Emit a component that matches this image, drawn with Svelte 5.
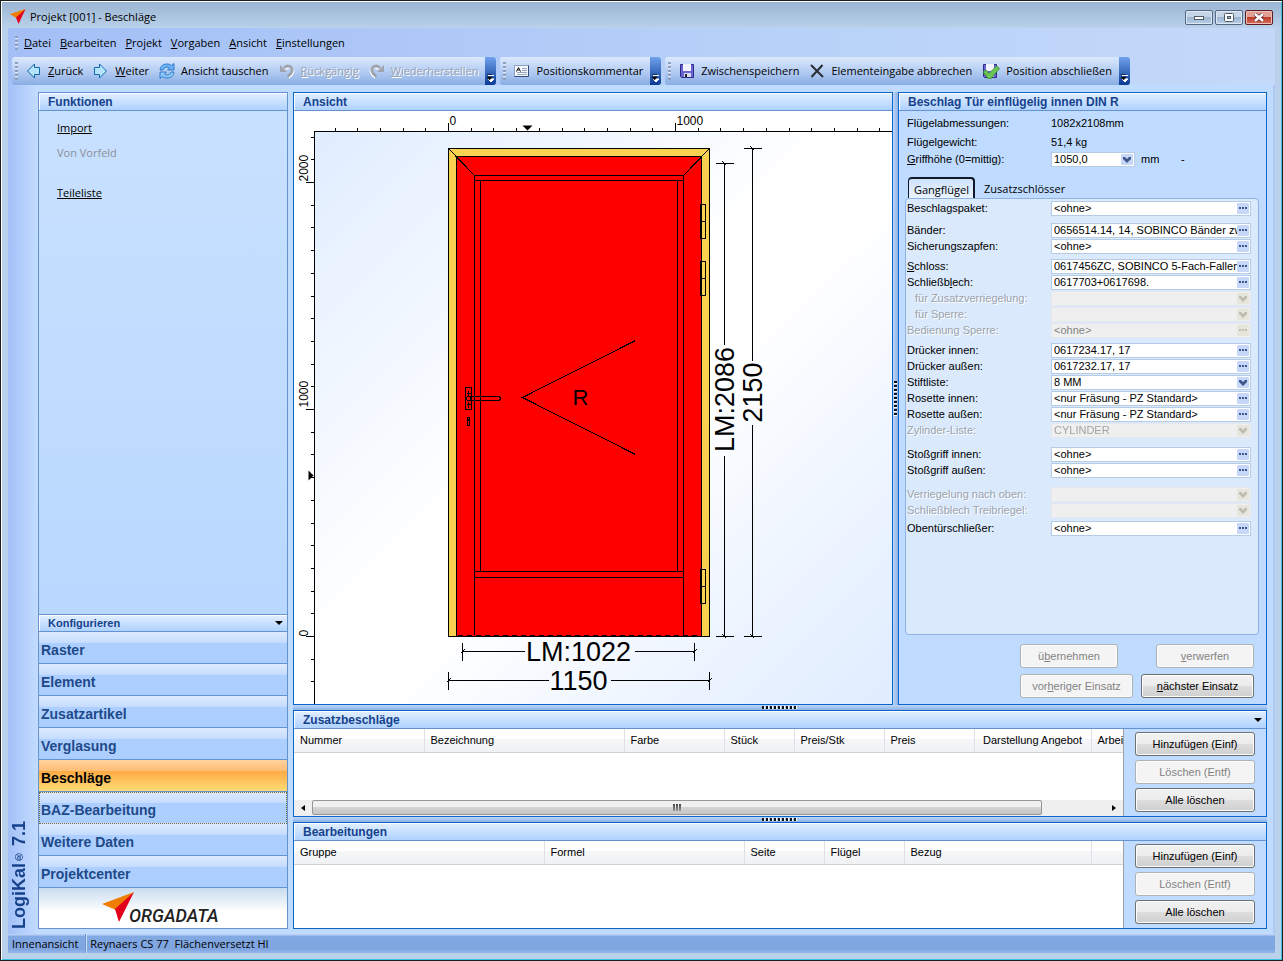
<script lang="ts">
	type Field = {
		label: string;
		value?: string;
		kind?: 'pick' | 'list';
		disabled?: boolean;
		indent?: boolean;
	};

	type Column = { title: string; width: number; center?: boolean };

	const menus = ['&Datei', '&Bearbeiten', '&Projekt', '&Vorgaben', '&Ansicht', '&Einstellungen'];

	const toolGroups = [
		[
			{ icon: 'back', label: '&Zurück' },
			{ icon: 'next', label: '&Weiter' },
			{ icon: 'swap', label: 'Ansicht tauschen' },
			{ icon: 'undo', label: '&Rückgängig', disabled: true },
			{ icon: 'redo', label: '&Wiederherstellen', disabled: true }
		],
		[{ icon: 'note', label: 'Positionskommentar' }],
		[
			{ icon: 'save', label: 'Zwischenspeichern' },
			{ icon: 'cancel', label: 'Elementeingabe abbrechen' },
			{ icon: 'done', label: 'Position abschließen' }
		]
	];

	const navItems = [
		'Raster',
		'Element',
		'Zusatzartikel',
		'Verglasung',
		'Beschläge',
		'BAZ-Bearbeitung',
		'Weitere Daten',
		'Projektcenter'
	];
	let activeNav = $state('Beschläge');

	const fieldGroups: { space: number; fields: Field[] }[] = [
		{ space: 0, fields: [{ label: 'Beschlagspaket:', value: '<ohne>' }] },
		{
			space: 6,
			fields: [
				{ label: 'Bänder:', value: '0656514.14, 14, SOBINCO Bänder zweiteilig' },
				{ label: 'Sicherungszapfen:', value: '<ohne>' }
			]
		},
		{
			space: 4,
			fields: [
				{ label: '&Schloss:', value: '0617456ZC, SOBINCO 5-Fach-Fallenschloss' },
				{ label: 'Schließb&lech:', value: '0617703+0617698.' },
				{ label: 'für Zusatzverriegelung:', kind: 'list', disabled: true, indent: true },
				{ label: 'für Sperre:', kind: 'list', disabled: true, indent: true },
				{ label: 'Bedienung Sperre:', value: '<ohne>', disabled: true }
			]
		},
		{
			space: 4,
			fields: [
				{ label: 'Drücker innen:', value: '0617234.17, 17' },
				{ label: 'Drücker außen:', value: '0617232.17, 17' },
				{ label: 'Stiftliste:', value: '8 MM', kind: 'list' },
				{ label: 'Rosette innen:', value: '<nur Fräsung - PZ Standard>' },
				{ label: 'Rosette außen:', value: '<nur Fräsung - PZ Standard>' },
				{ label: 'Zylinder-Liste:', value: 'CYLINDER', kind: 'list', disabled: true }
			]
		},
		{
			space: 8,
			fields: [
				{ label: 'Stoßgriff innen:', value: '<ohne>' },
				{ label: 'Stoßgriff außen:', value: '<ohne>' }
			]
		},
		{
			space: 8,
			fields: [
				{ label: 'Verriegelung nach oben:', kind: 'list', disabled: true },
				{ label: 'Schließblech Treibriegel:', kind: 'list', disabled: true }
			]
		},
		{ space: 2, fields: [{ label: 'Obentürschließer:', value: '<ohne>' }] }
	];

	const fittingColumns: Column[] = [
		{ title: 'Nummer', width: 130 },
		{ title: 'Bezeichnung', width: 200 },
		{ title: 'Farbe', width: 100 },
		{ title: 'Stück', width: 70 },
		{ title: 'Preis/Stk', width: 90 },
		{ title: 'Preis', width: 90 },
		{ title: 'Darstellung Angebot', width: 117, center: true },
		{ title: 'Arbeit', width: 80 }
	];

	const machiningColumns: Column[] = [
		{ title: 'Gruppe', width: 250 },
		{ title: 'Formel', width: 200 },
		{ title: 'Seite', width: 80 },
		{ title: 'Flügel', width: 80 },
		{ title: 'Bezug', width: 187 },
		{ title: '', width: 80 }
	];

	// one ruler tick every 100 mm
	const scale = 22.7;
	const xTicks = Array.from({ length: 25 }, (_, i) => i - 5);
	const yTicks = Array.from({ length: 25 }, (_, i) => i - 2);
	const hinges = [204, 261, 569];

	// "&" marks the mnemonic letter
	function split(label: string) {
		const at = label.indexOf('&');
		if (at < 0) return [label, '', ''];
		return [label.slice(0, at), label[at + 1], label.slice(at + 2)];
	}
</script>

{#snippet caption(label: string)}
	{@const [before, key, after] = split(label)}<span>{before}{#if key}<u>{key}</u>{/if}{after}</span>
{/snippet}

{#snippet chevron()}
	<svg class="chevron" width="12" height="11" viewBox="0 0 12 11" aria-hidden="true">
		<rect class="tile" width="12" height="11" rx="1" />
		<path d="M2 3h2l2 2 2-2h2v2L6 9 2 5z" />
	</svg>
{/snippet}

{#snippet icon(name: string)}
	{#if name === 'back' || name === 'next'}
		<svg width="16" height="16" viewBox="0 0 16 16" aria-hidden="true">
			<path
				d="M1.500 8L8.500 1v3.500h5v7h-5V15z"
				transform={name === 'next' ? 'matrix(-1 0 0 1 15 0)' : undefined}
				fill="#b4e4fa"
				stroke="#1467a8"
			/>
		</svg>
	{:else if name === 'swap'}
		<svg width="16" height="16" viewBox="0 0 16 16" aria-hidden="true">
			<path d="M1 7c.5-4 3-6 7-6 2 0 3.500.600 4.500 1.500L15 .5V7H8.500l2-2.200C8 3.500 5.500 4 4 7z" fill="#6db4f2" stroke="#1c68c4" stroke-width=".8" />
			<path d="M15 9c-.5 4-3 6-7 6-2 0-3.500-.6-4.500-1.500L1 15.500V9h6.500l-2 2.200C8 12.500 10.500 12 12 9z" fill="#8cc8f8" stroke="#1c68c4" stroke-width=".8" />
		</svg>
	{:else if name === 'undo' || name === 'redo'}
		<svg width="16" height="16" viewBox="0 0 16 16" aria-hidden="true">
			<g transform={name === 'redo' ? 'matrix(-1 0 0 1 16 0)' : undefined} fill="none">
				<path d="M5 5c4-4 9-1 8 3-.5 2-2 4-4.500 5.500" stroke="#fff" stroke-width="2.500" transform="translate(1 1)" />
				<path d="M5 5c4-4 9-1 8 3-.5 2-2 4-4.500 5.500" stroke="#a0a4ac" stroke-width="3" />
				<path d="M1 2v7h7z" fill="#a0a4ac" />
			</g>
		</svg>
	{:else if name === 'note'}
		<svg width="16" height="16" viewBox="0 0 16 16" aria-hidden="true">
			<rect x=".5" y="2.500" width="14" height="11" fill="#f4f8ff" stroke="#8fa3c4" />
			<path d="M.5 13.500h14v-11" fill="none" stroke="#344d7c" />
			<path d="M2.500 8.500l2-4 2 4M3.500 7h2" fill="none" stroke="#111" />
			<path d="M8 5.500h5M8 7.500h5M3 9.500h10M3 11.500h10" stroke="#9aa6bd" />
		</svg>
	{:else if name === 'cancel'}
		<svg width="16" height="16" viewBox="0 0 16 16" aria-hidden="true">
			<path d="M2 2l12 12M13.500 2L2.500 14" stroke="#2b2f38" stroke-width="2" fill="none" />
		</svg>
	{:else}
		<svg width={name === 'done' ? 18 : 16} height="16" viewBox="0 0 {name === 'done' ? 18 : 16} 16" aria-hidden="true">
			<path d="M1.500 1.500h13v13h-12l-1-1z" fill="#6a64d2" stroke="#2e2a86" />
			<rect x="4" y="1" width="8" height="7" fill="#f1f4ff" />
			<rect x="5" y="10" width="7" height="4" fill="#d8dcf0" />
			<rect x="6" y="11" width="2" height="3" fill="#222" />
			{#if name === 'done'}
				<path d="M1 9l3-2 3 3.500L14.500 3l3 2.500L8.500 16H6.500z" fill="#6cc655" stroke="#2f8a2a" stroke-width=".8" />
			{/if}
		</svg>
	{/if}
{/snippet}

{#snippet listView(name: string, columns: Column[])}
	<div class="table-clip">
		<table aria-label={name}>
			<colgroup>
				{#each columns as column}
					<col style="width: {column.width}px" />
				{/each}
			</colgroup>
			<thead>
				<tr>
					{#each columns as column}
						<th class:center={column.center}>{column.title}</th>
					{/each}
				</tr>
			</thead>
		</table>
	</div>
{/snippet}

{#snippet listActions()}
	<div class="list-actions">
		<button class="push">Hinzufügen (Einf)</button>
		<button class="push" disabled>Löschen (Entf)</button>
		<button class="push">Alle löschen</button>
	</div>
{/snippet}

<div class="window">
	<header class="titlebar">
		<svg width="16" height="16" viewBox="0 0 16 16" aria-hidden="true">
			<path d="M0 5L15.500 0 7 9.500z" fill="#ef7d00" />
			<path d="M15.500 0L8.500 15 6 8.500z" fill="#e2001a" />
		</svg>
		<h1>Projekt [001] - Beschläge</h1>
		<div class="window-buttons">
			<button aria-label="Minimieren">
				<svg width="12" height="8" viewBox="0 0 12 8"><rect x="1.500" y="3.500" width="9" height="3" fill="#fff" stroke="#505a66" /></svg>
			</button>
			<button aria-label="Maximieren">
				<svg width="12" height="9" viewBox="0 0 12 9"><rect x="1.500" y=".5" width="9" height="8" rx="1" fill="#fff" stroke="#505a66" /><rect x="4.500" y="3.500" width="3" height="2" fill="#9fb6d0" stroke="#505a66" /></svg>
			</button>
			<button class="close" aria-label="Schließen">
				<svg width="12" height="9" viewBox="0 0 12 9"><path d="M2 1l8 7M10 1L2 8" stroke="#5a2630" stroke-width="4" /><path d="M2 1l8 7M10 1L2 8" stroke="#fff" stroke-width="2.500" /></svg>
			</button>
		</div>
	</header>

	<div class="client">
		<nav class="menubar" aria-label="Menü">
			<i class="grip"></i>
			{#each menus as menu}
				<button>{@render caption(menu)}</button>
			{/each}
		</nav>

		<div class="toolbars">
			{#each toolGroups as group}
				<div class="toolbar" role="toolbar">
					<i class="grip"></i>
					{#each group as tool}
						<button class="tool" disabled={tool.disabled}>
							{@render icon(tool.icon)}
							{@render caption(tool.label)}
						</button>
					{/each}
					<button class="more" aria-label="Weitere Schaltflächen">
						<svg width="7" height="8" viewBox="0 0 7 8"><path d="M1 1.500h6M1 5h6l-3 3z" fill="#fff" stroke="#fff" /><path d="M0 .5h5M0 3h5L2.500 6z" fill="#000" stroke="#000" stroke-width=".5" /></svg>
					</button>
				</div>
			{/each}
		</div>

		<div class="workspace">
			<div class="brand"><span>LogiKal<small>®</small> 7.1</span></div>

			<aside class="sidebar">
				<h2 class="bar">Funktionen</h2>
				<div class="functions">
					<a href="#import">Import</a>
					<span class="off">Von Vorfeld</span>
					<a class="parts" href="#teileliste">Teileliste</a>
				</div>
				<button class="bar configure">
					Konfigurieren
					<svg width="8" height="4" viewBox="0 0 8 4" aria-hidden="true"><path d="M0 0h8L4 4z" /></svg>
				</button>
				<nav>
					{#each navItems as item}
						<button
							class="nav-item"
							class:active={item === activeNav}
							class:focus={item === 'BAZ-Bearbeitung'}
							onclick={() => (activeNav = item)}
						>
							{item}
						</button>
					{/each}
				</nav>
				<div class="logo">
					<svg width="124" height="36" viewBox="0 0 124 36" role="img" aria-label="Orgadata">
						<path d="M1 14L33 2 15 20z" fill="#ef7d00" />
						<path d="M33 2L18 32 14 19z" fill="#e2001a" />
						<text x="28" y="32">ORGADATA</text>
					</svg>
				</div>
			</aside>

			<main>
				<div class="upper">
					<section class="panel view">
						<h2 class="bar">Ansicht</h2>
						<!-- integer coordinates are pixel centres -->
						<svg
							class="drawing"
							viewBox="293.500 110.500 598 592"
							preserveAspectRatio="xMidYMin meet"
							role="img"
							aria-label="Türansicht"
						>
							<defs>
								<linearGradient id="sky" x1="0" y1="0" x2="1" y2="1">
									<stop offset="0" stop-color="#dfedff" />
									<stop offset=".12" stop-color="#e9f2ff" />
									<stop offset=".45" stop-color="#fff" />
									<stop offset=".55" stop-color="#fff" />
									<stop offset=".85" stop-color="#e9f2ff" />
									<stop offset="1" stop-color="#dfedff" />
								</linearGradient>
							</defs>
							<rect x="293" y="110" width="600" height="595" fill="#fff" />
							<rect x="314" y="131" width="580" height="574" fill="url(#sky)" />

							<g class="line">
								<path d="M314 706V131H893" />
								{#each xTicks as n}
									<path d="M{Math.round(448 + n * scale)} 131v{n % 10 === 0 ? -9 : -4}" />
								{/each}
								{#each yTicks as n}
									<path d="M314 {Math.round(636 - n * scale)}h{n % 10 === 0 ? -9 : -4}" />
								{/each}
							</g>
							<path d="M522 125h10l-5 5z" />
							<path d="M308 470v10l5-5z" />
							<g class="ruler-text">
								<text x="449" y="124">0</text>
								<text x="676" y="124">1000</text>
								<text transform="translate(307 181) rotate(-90)">2000</text>
								<text transform="translate(307 407) rotate(-90)">1000</text>
								<text transform="translate(307 636) rotate(-90)">0</text>
							</g>

							<g class="line">
								<rect x="448" y="148" width="261" height="488" fill="#fad050" />
								<rect x="456" y="156" width="245" height="480" fill="#f00" />
								<path d="M474 636V175H683V636M474 180H683M480 180V571M677 180V571M474 571H683M474 577H683" />
								<path d="M448 148l26 27M709 148l-26 27M635 340L522 397 635 454" />
								<path d="M457 635H701" stroke="#f00" />
								<path d="M457 635H701" stroke-dasharray="5 4" />
								{#each hinges as y}
									<rect x="700" {y} width="5" height="34" />
									<path d="M701 {y}v34M700 {y + 17}h5" />
								{/each}
								<rect x="465" y="387" width="6" height="22" />
								<path d="M468 390v6M466 393h5M468 401v6M466 404h5" />
								<path d="M470 396h29l1 2-1 2h-29z" />
								<circle cx="468" cy="398" r="2" />
								<circle cx="468" cy="418" r="1" />
								<path d="M467 420h2v5h-2z" />
								<path d="M724 163V344M724 455V636M715 163h18M715 636h18M722 161l4 4M722 634l4 4" />
								<path d="M752 148V360M752 424V636M743 148h18M743 636h18M750 146l4 4M750 634l4 4" />
								<path d="M462 651H524M634 651H694M462 642v18M694 642v18M460 653l4-4M692 653l4-4" />
								<path d="M448 680H548M610 680H709M448 671v18M709 671v18M446 682l4-4M707 682l4-4" />
							</g>
							<text class="mark" x="572" y="404">R</text>
							<g class="dimension">
								<text transform="translate(733 399) rotate(-90)">LM:2086</text>
								<text transform="translate(761 392) rotate(-90)">2150</text>
								<text x="578" y="660">LM:1022</text>
								<text x="578" y="689">1150</text>
							</g>
						</svg>
					</section>

					<div class="splitter upright"><i></i></div>

					<section class="panel fittings">
						<h2 class="bar">Beschlag Tür einflügelig innen DIN R</h2>
						<dl>
							<dt>Flügelabmessungen:</dt>
							<dd>1082x2108mm</dd>
							<dt>Flügelgewicht:</dt>
							<dd>51,4 kg</dd>
						</dl>
						<div class="field handle">
							<label for="handle-height">{@render caption('&Griffhöhe (0=mittig):')}</label>
							<div class="control">
								<select id="handle-height"><option>1050,0</option></select>
								{@render chevron()}
							</div>
							<span class="unit">mm</span>
							<span>-</span>
						</div>
						<div class="tabs" role="tablist">
							<button role="tab" aria-selected="true">Gangflügel</button>
							<button role="tab" aria-selected="false">Zusatzschlösser</button>
						</div>
						<div class="tab-page">
							{#each fieldGroups as group, g}
								<div class="group" style="margin-top: {group.space}px">
									{#each group.fields as field, f}
										<div class="field" class:indent={field.indent} class:off={field.disabled}>
											<label for="field-{g}-{f}">{@render caption(field.label)}</label>
											<div class="control">
												{#if field.kind === 'list'}
													<select id="field-{g}-{f}" disabled={field.disabled}>
														<option>{field.value ?? ''}</option>
													</select>
													{@render chevron()}
												{:else}
													<input id="field-{g}-{f}" type="text" value={field.value} disabled={field.disabled} />
													<button class="pick" aria-label="Auswählen" disabled={field.disabled}><i></i><i></i><i></i></button>
												{/if}
											</div>
										</div>
									{/each}
								</div>
							{/each}
						</div>
						<div class="actions">
							<button class="push short" disabled>{@render caption('ü&bernehmen')}</button>
							<button class="push short" disabled>{@render caption('&verwerfen')}</button>
							<button class="push" disabled>{@render caption('vor&heriger Einsatz')}</button>
							<button class="push">{@render caption('&nächster Einsatz')}</button>
						</div>
					</section>
				</div>

				<div class="splitter"><i></i></div>

				<section class="panel">
					<h2 class="bar">
						Zusatzbeschläge
						<svg width="8" height="4" viewBox="0 0 8 4" aria-hidden="true"><path d="M0 0h8L4 4z" /></svg>
					</h2>
					<div class="list">
						<div class="list-body">
							{@render listView('Zusatzbeschläge', fittingColumns)}
							<div class="scrollbar">
								<button aria-label="Nach links"><svg width="4" height="6" viewBox="0 0 4 6"><path d="M4 0v6L0 3z" /></svg></button>
								<div class="track"><div class="thumb"><i></i><i></i><i></i></div></div>
								<button aria-label="Nach rechts"><svg width="4" height="6" viewBox="0 0 4 6"><path d="M0 0v6l4-3z" /></svg></button>
							</div>
						</div>
						{@render listActions()}
					</div>
				</section>

				<div class="splitter"><i></i></div>

				<section class="panel">
					<h2 class="bar">Bearbeitungen</h2>
					<div class="list">
						<div class="list-body">
							{@render listView('Bearbeitungen', machiningColumns)}
						</div>
						{@render listActions()}
					</div>
				</section>
			</main>
		</div>

		<footer class="status">
			<span>Innenansicht</span>
			<span>Reynaers CS 77&nbsp; Flächenversetzt HI</span>
		</footer>
	</div>
</div>

<style>
	:global(body) {
		margin: 0;
	}

	.window {
		box-sizing: border-box;
		min-height: 100vh;
		display: flex;
		flex-direction: column;
		padding: 0 7px 7px 6px;
		border: 1px solid #1d1d22;
		background: #b9d1ea;
		box-shadow: inset 1px 1px #fff, inset -1px -1px #38c4de;
		font: 11px/16px 'Liberation Sans', Arial, sans-serif;
		color: #000;
	}

	button,
	input,
	select {
		font: inherit;
		color: inherit;
		margin: 0;
		padding: 0;
		border: 0;
		background: none;
		border-radius: 0;
	}

	h1,
	h2,
	dl,
	dd {
		margin: 0;
		font: inherit;
	}

	svg {
		display: block;
		flex: none;
	}

	.titlebar {
		display: flex;
		align-items: center;
		gap: 4px;
		box-sizing: border-box;
		height: 27px;
		margin: 0 -6px 0 -5px;
		padding: 4px 8px 0 8px;
		border-top: 1px solid #fff;
		background: linear-gradient(#9ab4d2, #b9d1ea);
	}

	h1 {
		flex: 1;
		font: 11px/16px 'Open Sans', sans-serif;
	}

	.window-buttons {
		display: flex;
		gap: 2px;
	}

	.window-buttons button {
		display: grid;
		place-items: center;
		width: 28px;
		height: 15px;
		border: 1px solid #56677f;
		border-radius: 2px;
		background: linear-gradient(#c5d5e8 50%, #9fb6d1 50%, #b8cfe8);
		box-shadow: inset 0 0 0 1px #dce8f4;
	}

	.window-buttons .close {
		border-color: #5b1c22;
		background: linear-gradient(#e2a094 50%, #bf3d2b 50%, #d5705a);
		box-shadow: inset 0 0 0 1px #ecc0b8;
	}

	.client {
		flex: 1;
		display: flex;
		flex-direction: column;
		background: linear-gradient(90deg, #a3bff6, #b7d1f8 60%, #c4d9fa);
		border-left: 1px solid #b9d1ea;
	}

	.grip {
		width: 3px;
		background: repeating-linear-gradient(#8f9fbd 0 2px, #dfe9fb 2px 3px, transparent 3px 4px);
		flex: none;
	}

	.menubar {
		display: flex;
		align-items: center;
		gap: 9px;
		height: 29px;
		padding-left: 7px;
		font: 11px/16px 'Open Sans', sans-serif;
	}

	.menubar .grip {
		height: 14px;
		margin-right: -3px;
	}

	.toolbars {
		display: flex;
		gap: 4px;
		padding: 0 4px;
		font: 11px/16px 'Open Sans', sans-serif;
	}

	.toolbar {
		display: flex;
		align-items: center;
		gap: 10px;
		height: 28px;
		padding-left: 3px;
		border-radius: 3px;
		background: linear-gradient(#dbe9fc, #b5cdf3 50%, #89ade3);
	}

	.toolbar .grip {
		height: 18px;
		margin-right: -2px;
	}

	.tool {
		display: flex;
		align-items: center;
		gap: 6px;
		white-space: nowrap;
	}

	.tool:disabled {
		color: #9aa3b3;
		text-shadow: 1px 1px #fff;
	}

	.more {
		align-self: stretch;
		display: flex;
		align-items: flex-end;
		justify-content: center;
		width: 11px;
		margin-left: -3px;
		padding-bottom: 3px;
		border-radius: 0 3px 3px 0;
		background: linear-gradient(#6fa1ec, #0a3a93);
	}

	.workspace {
		flex: 1;
		display: flex;
		padding: 7px 6px 5px 0;
		background: #bfdbff;
		border-right: 2px solid #adc9f4;
	}

	.brand {
		display: flex;
		flex-direction: column;
		justify-content: flex-end;
		box-sizing: border-box;
		width: 30px;
		margin: -7px 0 -5px;
		background: linear-gradient(90deg, #a3c0f7, #c3dcff);
		color: #15428b;
		font: bold 18px/22px 'Liberation Sans', Arial, sans-serif;
	}

	.brand span {
		writing-mode: vertical-rl;
		rotate: 180deg;
		padding-top: 5px;
		white-space: nowrap;
	}

	.brand small {
		font-size: 11px;
	}

	.sidebar {
		display: flex;
		flex-direction: column;
		flex: none;
		box-sizing: border-box;
		width: 250px;
		margin-right: 5px;
		border: 1px solid #6593cf;
		background: linear-gradient(#c9e1ff, #afd2ff);
	}

	.bar {
		display: flex;
		align-items: center;
		justify-content: space-between;
		box-sizing: border-box;
		flex: none;
		height: 18px;
		padding: 0 4px 0 9px;
		border-bottom: 1px solid #6593cf;
		background: linear-gradient(#e3efff, #afd2ff);
		box-shadow: inset 1px 1px #fff;
		color: #15428b;
		font: bold 12px/16px 'Liberation Sans', Arial, sans-serif;
	}

	.bar path {
		fill: #000;
	}

	.functions {
		flex: 1;
		display: flex;
		flex-direction: column;
		align-items: flex-start;
		gap: 9px;
		padding: 9px 18px;
		font: 11px/16px 'Open Sans', sans-serif;
	}

	.functions a {
		color: #000;
	}

	.functions .off {
		color: #8a8f98;
	}

	.parts {
		margin-top: 15px;
	}

	.configure {
		border-top: 1px solid #6593cf;
		font-size: 11px;
	}

	.nav-item {
		display: block;
		box-sizing: border-box;
		width: 100%;
		height: 32px;
		padding: 4px 2px 0;
		border-bottom: 1px solid #6593cf;
		background: linear-gradient(#deebfe, #c5dcff 11px, #adcfff 11px);
		color: #1e4a8a;
		text-align: left;
		font: bold 14px/16px 'Liberation Sans', Arial, sans-serif;
	}

	.nav-item.active {
		background: linear-gradient(#ffd3a0, #ffbd74 11px, #ffaa43 11px, #fedc77);
		color: #000;
	}

	.nav-item.focus {
		border-bottom: 1px dotted #7a2018;
		outline: 1px dotted #7a6a3c;
		outline-offset: -1px;
	}

	.logo {
		display: grid;
		place-items: center;
		height: 40px;
		background: linear-gradient(#c9dcef, #fff 60%);
	}

	.logo text {
		font: italic 500 18px Roboto, sans-serif;
		fill: #222;
	}

	main {
		flex: 1;
		min-width: 0;
		display: flex;
		flex-direction: column;
	}

	.upper {
		flex: 1;
		display: flex;
	}

	.panel {
		display: flex;
		flex-direction: column;
		border: 1px solid #0a66c8;
		background: #bfdbff;
	}

	.view {
		flex: 1;
		min-width: 0;
	}

	.drawing {
		flex: 1 1 560px;
		width: 100%;
		min-height: 0;
		background: #fff;
		font-family: 'Liberation Sans', Arial, sans-serif;
	}

	.line {
		fill: none;
		stroke: #000;
		shape-rendering: crispEdges;
	}

	.ruler-text {
		font-size: 12px;
	}

	.mark {
		font-size: 22px;
	}

	.dimension {
		font-size: 27px;
		text-anchor: middle;
	}

	.splitter {
		display: grid;
		place-items: center;
		height: 5px;
		background: linear-gradient(#bcd6fa, #8fb2e6);
	}

	.splitter i {
		width: 36px;
		height: 3px;
		background: repeating-linear-gradient(90deg, #111 0 2px, #fff 2px 3px, transparent 3px 4px);
	}

	.splitter.upright {
		width: 5px;
		height: auto;
		background: linear-gradient(90deg, #bcd6fa, #8fb2e6);
	}

	.splitter.upright i {
		width: 3px;
		height: 36px;
		background: repeating-linear-gradient(#111 0 2px, #fff 2px 3px, transparent 3px 4px);
	}

	.fittings {
		flex: none;
		box-sizing: border-box;
		width: 369px;
	}

	dl {
		display: grid;
		grid-template-columns: 144px auto;
		row-gap: 3px;
		padding: 4px 8px 0;
	}

	.field {
		display: flex;
		height: 16px;
		align-items: center;
	}

	.field label {
		width: 144px;
		flex: none;
	}

	.field.indent label {
		width: 136px;
		padding-left: 8px;
	}

	.field.off label {
		color: #9ba3ad;
		text-shadow: 1px 1px #fff;
	}

	.handle {
		padding: 1px 8px 0;
	}

	.handle .control {
		flex: none;
		width: 84px;
	}

	.handle .unit {
		width: 40px;
		padding-left: 6px;
	}

	.control {
		display: flex;
		align-items: center;
		flex: 1;
		box-sizing: border-box;
		height: 15px;
		min-width: 0;
		padding-right: 1px;
		border: 1px solid #b5cbe6;
		background: #fff;
	}

	.control input,
	.control select {
		flex: 1;
		min-width: 0;
		height: 13px;
		line-height: 13px;
		padding: 0 0 0 2px;
		appearance: none;
		outline: 0;
	}

	.chevron path {
		fill: #40578c;
	}

	.chevron .tile {
		fill: #c6d7fa;
	}

	.pick {
		display: flex;
		align-items: center;
		justify-content: center;
		gap: 1px;
		width: 12px;
		height: 11px;
		border-radius: 1px;
		background: #c6d7fa;
	}

	.pick i {
		width: 2px;
		height: 2px;
		background: #40578c;
	}

	.off .control {
		border-color: #e4e8ec;
		background: #efefef;
		color: #838383;
	}

	.off .pick {
		background: #e6e5dc;
	}

	.off .tile {
		fill: #e6e5dc;
	}

	.off .pick i {
		background: #bdbcae;
	}

	.off .chevron path {
		fill: #bdbcae;
	}

	.tabs {
		display: flex;
		align-items: flex-end;
		height: 22px;
		margin-top: 9px;
		padding-left: 9px;
		font: 11px/16px 'Open Sans', sans-serif;
	}

	.tabs button {
		height: 21px;
		padding: 2px 9px 0;
	}

	.tabs [aria-selected='true'] {
		padding: 2px 4px 0 5px;
		border: 1px solid #10182a;
		border-top-width: 2px;
		border-right-width: 2px;
		border-bottom: 0;
		border-radius: 4px 4px 0 0;
		background: linear-gradient(#cfe2fb, #eaf3fe);
	}

	.tab-page {
		flex: 1;
		margin: 0 7px 0 6px;
		padding: 1px 7px 2px 1px;
		border: 1px solid #8db2e3;
		border-radius: 4px;
		background: #dae9fb;
	}

	.actions {
		display: grid;
		grid-template-columns: 113px 113px;
		gap: 6px 8px;
		justify-content: end;
		padding: 9px 12px 6px;
	}

	.push {
		height: 24px;
		border: 1px solid #707070;
		border-radius: 3px;
		background: linear-gradient(#f2f2f2, #ebebeb 50%, #dddddd 50%, #cfcfcf);
		box-shadow: inset 0 0 0 1px #fcfcfc;
	}

	.push:disabled {
		border-color: #adb2b5;
		background: #f4f4f4;
		color: #838383;
	}

	.push.short {
		width: 98px;
	}

	.push.short:nth-child(2) {
		justify-self: end;
	}

	.list {
		display: flex;
		height: 87px;
	}

	.list-body {
		flex: 1;
		min-width: 0;
		display: flex;
		flex-direction: column;
		justify-content: space-between;
		border-right: 1px solid #a0a0a0;
		background: #fff;
	}

	.table-clip {
		overflow: hidden;
	}

	table {
		table-layout: fixed;
		width: 877px;
		border-collapse: collapse;
	}

	th {
		box-sizing: border-box;
		height: 23px;
		padding: 0 6px;
		border-right: 1px solid #dfe1e4;
		border-bottom: 1px solid #d0d0d0;
		background: linear-gradient(#fff 45%, #f5f6f8 45%, #f0f1f3);
		font-weight: normal;
		text-align: left;
		white-space: nowrap;
	}

	th.center {
		text-align: center;
	}

	.scrollbar {
		display: flex;
		height: 16px;
		background: #efefef;
	}

	.scrollbar button {
		display: grid;
		place-items: center;
		width: 18px;
	}

	.track {
		flex: 1;
	}

	.thumb {
		display: flex;
		align-items: center;
		justify-content: center;
		gap: 1px;
		box-sizing: border-box;
		width: 92%;
		height: 15px;
		border: 1px solid #979797;
		border-radius: 2px;
		background: linear-gradient(#f0f0f0 45%, #d4d4d4 50%, #c4c4c4);
	}

	.thumb i {
		width: 2px;
		height: 7px;
		background: linear-gradient(#444, #999);
	}

	.list-actions {
		display: flex;
		flex-direction: column;
		gap: 4px;
		box-sizing: border-box;
		width: 142px;
		padding: 3px 11px 0;
	}

	.status {
		display: flex;
		height: 19px;
		padding: 0 2px;
		background: linear-gradient(#b9d0f5 1px, #83a9e3 2px, #7fa5e0 80%, #96b7ea);
		font: 11px/20px 'Open Sans', sans-serif;
	}

	.status span {
		padding: 0 3px;
	}

	.status span:first-child {
		padding: 0 8px 0 2px;
		border-right: 1px solid #cfe0fa;
		box-shadow: inset -1px 0 #6a92d4;
	}
</style>
